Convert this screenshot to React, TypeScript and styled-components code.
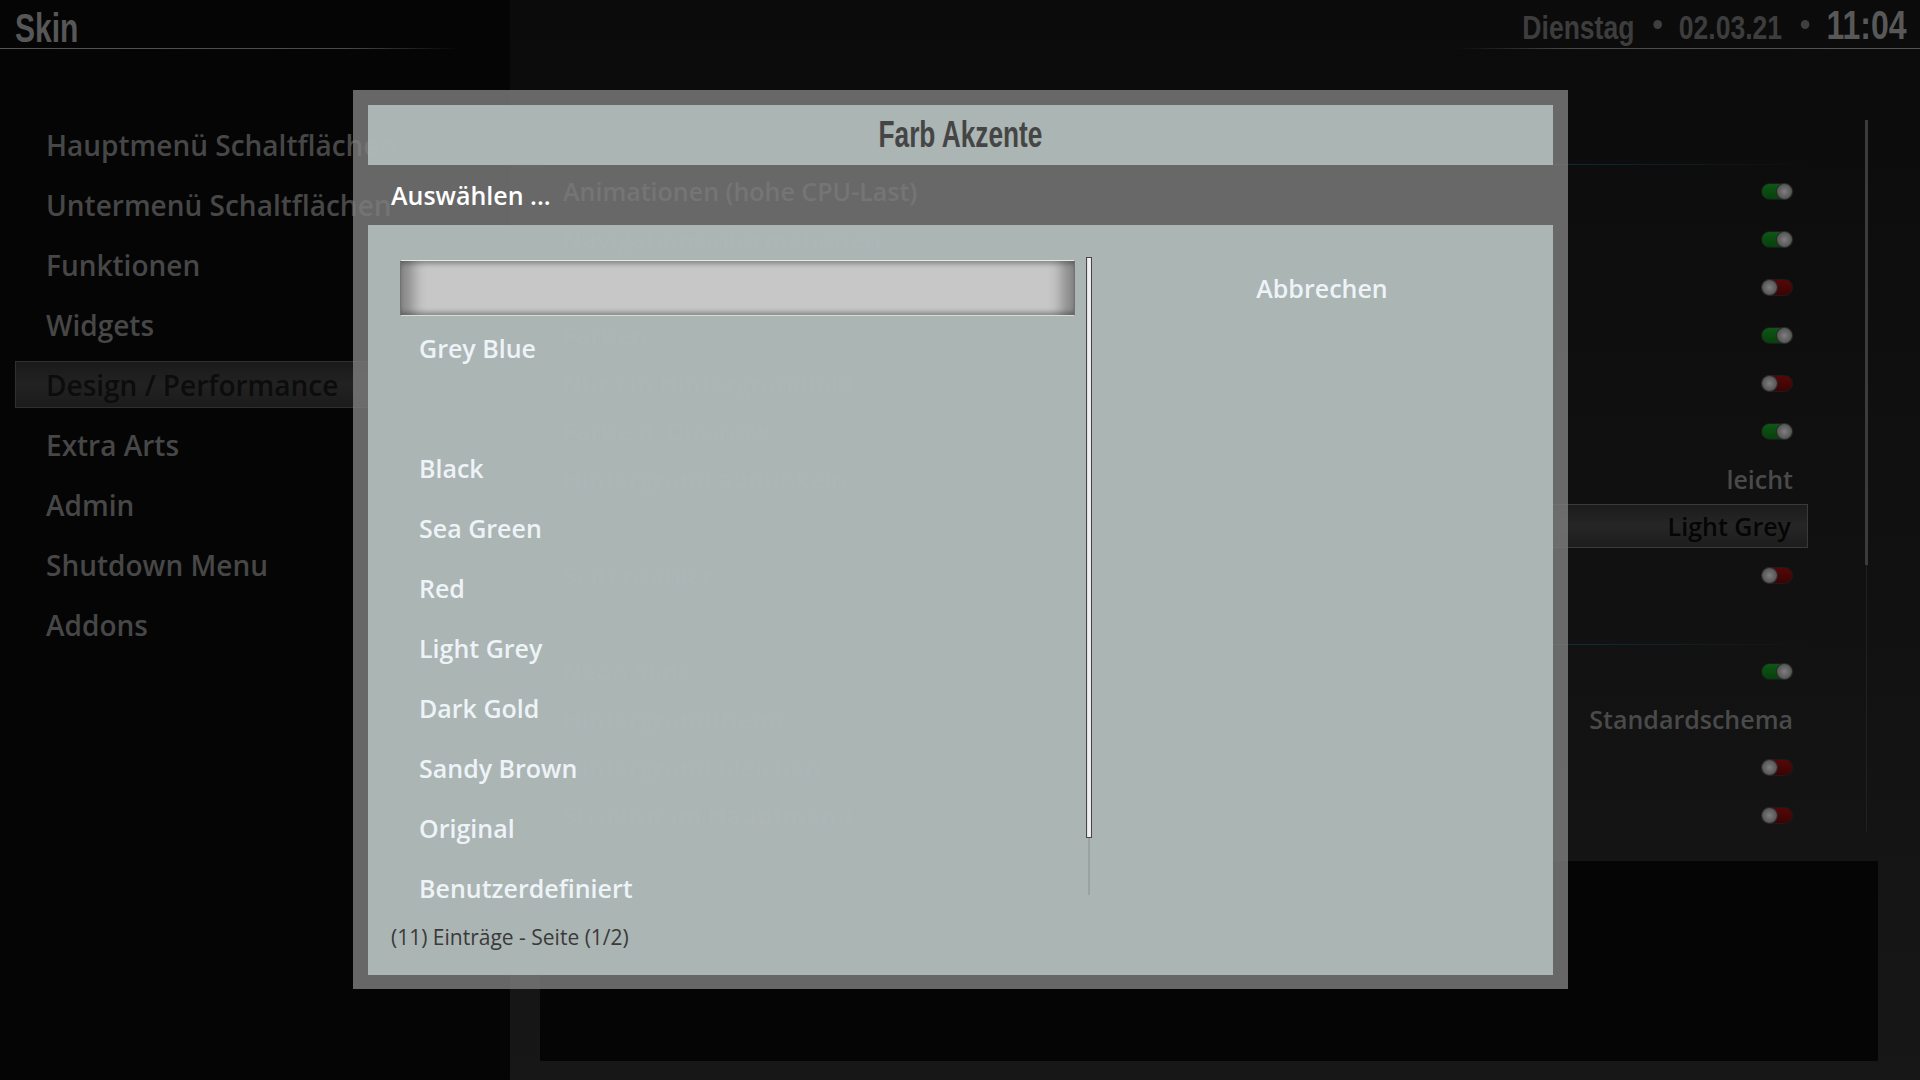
import styled, { createGlobalStyle } from 'styled-components';

const GlobalStyle = createGlobalStyle`
  html, body {
    margin: 0;
    padding: 0;
    background: #0c0c0c;
    overflow: hidden;
  }
`;

// no Impact-like face is installed, so squeeze a bold sans instead
const condensed = `"Liberation Sans", Arial, sans-serif`;

type Control =
  | { kind: 'toggle'; on: boolean }
  | { kind: 'value'; text: string }
  | { kind: 'gap' };

interface Setting {
  label: string;
  control: Control;
  active?: boolean;
}

const navItems = [
  'Hauptmenü Schaltflächen',
  'Untermenü Schaltflächen',
  'Funktionen',
  'Widgets',
  'Design / Performance',
  'Extra Arts',
  'Admin',
  'Shutdown Menu',
  'Addons',
];

const settings: Setting[] = [
  { label: 'Animationen (hohe CPU-Last)', control: { kind: 'toggle', on: true } },
  { label: 'Navigationsinformationen', control: { kind: 'toggle', on: true } },
  { label: 'Hintergrund-Overlay', control: { kind: 'toggle', on: false } },
  { label: 'Farben', control: { kind: 'toggle', on: true } },
  { label: 'Nur ein Hintergrundbild', control: { kind: 'toggle', on: false } },
  { label: 'Farbe d. Diashow', control: { kind: 'toggle', on: true } },
  { label: 'Hintergrund abdunkeln', control: { kind: 'value', text: 'leicht' } },
  { label: 'Farb Akzente', control: { kind: 'value', text: 'Light Grey' }, active: true },
  { label: 'Seitenzähler', control: { kind: 'toggle', on: false } },
  { label: '', control: { kind: 'gap' } },
  { label: 'Neon Slide', control: { kind: 'toggle', on: true } },
  { label: 'Hintergrundtheme', control: { kind: 'value', text: 'Standardschema' } },
  { label: 'Hintergrund bleichen', control: { kind: 'toggle', on: false } },
  { label: 'Struktur im Hauptmenü', control: { kind: 'toggle', on: false } },
];

const accents = [
  '',
  'Grey Blue',
  '',
  'Black',
  'Sea Green',
  'Red',
  'Light Grey',
  'Dark Gold',
  'Sandy Brown',
  'Original',
  'Benutzerdefiniert',
];

export default function App() {
  return (
    <>
      <GlobalStyle />
      <Screen>
        <Sidebar>
          <TopBar>
            <SkinTitle>Skin</SkinTitle>
          </TopBar>
          <HeaderRule />
          <Nav>
            {navItems.map((item) => (
              <NavItem key={item} $active={item === 'Design / Performance'}>
                {item}
              </NavItem>
            ))}
          </Nav>
        </Sidebar>

        <Main>
          <TopBar $right>
            <Clock>
              <DatePart>Dienstag</DatePart>
              <Dot />
              <DatePart>02.03.21</DatePart>
              <Dot />
              <TimePart>11:04</TimePart>
            </Clock>
          </TopBar>
          <HeaderRule $right />
          <MainContent>
            <SettingsList>
              <SectionRule />
              <RowsWrap>
                {settings.map((s, i) =>
                  s.control.kind === 'gap' ? (
                    <SectionGap key={i}>
                      <SectionRule />
                    </SectionGap>
                  ) : (
                    <SettingRow key={i} $active={s.active}>
                      <span>{s.label}</span>
                      {s.control.kind === 'toggle' ? (
                        <Toggle $on={s.control.on} />
                      ) : (
                        <span>{s.control.text}</span>
                      )}
                    </SettingRow>
                  ),
                )}
              </RowsWrap>
            </SettingsList>
            <PageScroll>
              <PageThumb />
              <PageTail />
            </PageScroll>
          </MainContent>
          <InfoBox />
        </Main>

        <Dialog>
          <DialogTitle>
            <TitleText>Farb Akzente</TitleText>
          </DialogTitle>
          <DialogBand>Auswählen ...</DialogBand>
          <DialogBody>
            <List>
              {accents.map((name, i) => (
                <ListItem key={i} $focused={i === 0}>
                  {name}
                </ListItem>
              ))}
            </List>
            <ListScroll>
              <ListThumb />
              <ListTail />
            </ListScroll>
            <ButtonColumn>
              <CancelButton>Abbrechen</CancelButton>
            </ButtonColumn>
            <Footer>(11) Einträge - Seite (1/2)</Footer>
          </DialogBody>
        </Dialog>
      </Screen>
    </>
  );
}

const Screen = styled.div`
  position: relative;
  width: 1920px;
  height: 1080px;
  display: grid;
  grid-template-columns: 510px 1fr;
  overflow: hidden;
  font-family: "Open Sans", "Noto Sans", sans-serif;
`;

const Sidebar = styled.div`
  background: #050505;
  display: flex;
  flex-direction: column;
`;

const Main = styled.div`
  background: linear-gradient(180deg, #0b0b0b 0%, #111111 55%, #171717 100%);
  display: flex;
  flex-direction: column;
`;

const TopBar = styled.div<{ $right?: boolean }>`
  height: 48px;
  display: flex;
  align-items: flex-end;
  justify-content: ${(p) => (p.$right ? 'flex-end' : 'flex-start')};
  padding: ${(p) => (p.$right ? '0 13px 0 0' : '0 0 0 15px')};
  box-sizing: border-box;
`;

const SkinTitle = styled.div`
  display: inline-block;
  font-family: ${condensed};
  font-weight: 700;
  font-size: 40px;
  line-height: 40px;
  height: 40px;
  color: #575757;
  transform: scaleX(0.75);
  transform-origin: left center;
`;

const HeaderRule = styled.div<{ $right?: boolean }>`
  height: 1px;
  width: ${(p) => (p.$right ? '463px' : '460px')};
  align-self: ${(p) => (p.$right ? 'flex-end' : 'flex-start')};
  background: ${(p) =>
    p.$right
      ? 'linear-gradient(90deg, rgba(90,90,90,0) 0%, #4a4a4a 25%, #555 100%)'
      : 'linear-gradient(90deg, #555 0%, #4a4a4a 75%, rgba(90,90,90,0) 100%)'};
`;

const Clock = styled.div`
  display: flex;
  align-items: baseline;
  height: 46px;
  font-family: ${condensed};
  font-weight: 700;
  line-height: 46px;
  transform: scaleX(0.78);
  transform-origin: right center;
`;

const DatePart = styled.span`
  font-size: 34px;
  color: #3d3d3d;
`;

const TimePart = styled.span`
  font-size: 41px;
  color: #585858;
`;

const Dot = styled.span`
  width: 11px;
  height: 9px;
  border-radius: 50%;
  background: #3f3f3f;
  margin: 0 22px 0 24px;
  transform: translateY(-10px);
`;

const Nav = styled.nav`
  margin-top: 72px;
  display: flex;
  flex-direction: column;
  gap: 13px;
`;

const NavItem = styled.div<{ $active?: boolean }>`
  box-sizing: border-box;
  height: 47px;
  width: 480px;
  margin-left: 15px;
  padding-left: 30px;
  display: flex;
  align-items: center;
  white-space: nowrap;
  font-size: 28px;
  font-weight: 600;
  color: ${(p) => (p.$active ? '#0c0c0c' : '#474747')};
  border: 1px solid ${(p) => (p.$active ? '#2f2f2f' : 'transparent')};
  background: ${(p) =>
    p.$active ? 'linear-gradient(180deg, #1a1a1a 0%, #222 50%, #1b1b1b 100%)' : 'transparent'};
`;

const MainContent = styled.div`
  margin: 71px 0 0 30px;
  display: grid;
  grid-template-columns: 1270px 3px;
  column-gap: 55px;
  align-items: start;
`;

const SettingsList = styled.div`
  margin-top: 44px;
  display: flex;
  flex-direction: column;
`;

const SectionRule = styled.div`
  height: 1px;
  background: linear-gradient(90deg, rgba(16, 70, 90, 0.9) 0%, rgba(16, 70, 90, 0.8) 70%, rgba(16, 70, 90, 0) 100%);
`;

const RowsWrap = styled.div`
  padding-top: 2px;
  display: flex;
  flex-direction: column;
`;

const SectionGap = styled.div`
  height: 48px;
  padding-top: 45px;
  box-sizing: border-box;
`;

const SettingRow = styled.div<{ $active?: boolean }>`
  box-sizing: border-box;
  height: ${(p) => (p.$active ? '44px' : '48px')};
  margin: ${(p) => (p.$active ? '1px 2px 3px 0' : '0')};
  padding: ${(p) => (p.$active ? '0 16px 0 22px' : '0 17px 0 23px')};
  display: flex;
  align-items: center;
  justify-content: space-between;
  font-size: 25px;
  font-weight: 600;
  white-space: nowrap;
  color: ${(p) => (p.$active ? '#050505' : '#4a4a4a')};
  border: ${(p) => (p.$active ? '1px solid #3a3a3a' : 'none')};
  background: ${(p) =>
    p.$active ? 'linear-gradient(180deg, #1c1c1c 0%, #262626 50%, #1d1d1d 100%)' : 'transparent'};
`;

const Toggle = styled.span<{ $on: boolean }>`
  position: relative;
  width: 32px;
  height: 17px;
  box-sizing: border-box;
  border-radius: 9px;
  border: 1px solid #1c1c1c;
  background: ${(p) =>
    p.$on
      ? 'linear-gradient(180deg, #0d5616 0%, #08400d 100%)'
      : 'linear-gradient(180deg, #560707 0%, #3a0404 100%)'};

  &::after {
    content: '';
    position: absolute;
    top: 0;
    left: ${(p) => (p.$on ? '15px' : '0')};
    width: 15px;
    height: 15px;
    border-radius: 50%;
    background: radial-gradient(circle at 50% 50%, #7e7e7e 0%, #5e5e5e 55%, #3e3e3e 100%);
    box-shadow: 0 0 0 1px #2a2a2a;
  }
`;

const PageScroll = styled.div`
  width: 3px;
  height: 712px;
  display: flex;
  flex-direction: column;
  align-items: center;
`;

const PageThumb = styled.div`
  width: 3px;
  height: 445px;
  background: #3b3b3b;
`;

const PageTail = styled.div`
  width: 1px;
  flex: 1;
  background: #202020;
`;

const InfoBox = styled.div`
  margin: 22px 0 0 30px;
  width: 1338px;
  height: 200px;
  background: #050505;
`;

const Dialog = styled.div`
  position: absolute;
  left: 353px;
  top: 90px;
  width: 1215px;
  height: 899px;
  box-sizing: border-box;
  padding: 15px 15px 14px;
  background: rgba(128, 128, 128, 0.8);
  display: flex;
  flex-direction: column;
`;

const DialogTitle = styled.div`
  height: 60px;
  flex-shrink: 0;
  background: rgba(175, 185, 184, 0.95);
  display: flex;
  align-items: center;
  justify-content: center;
`;

const TitleText = styled.span`
  display: inline-block;
  font-family: ${condensed};
  font-weight: 700;
  font-size: 37px;
  color: #454545;
  transform: scaleX(0.71);
  transform-origin: center;
`;

const DialogBand = styled.div`
  height: 60px;
  flex-shrink: 0;
  display: flex;
  align-items: center;
  padding-left: 23px;
  font-size: 25px;
  font-weight: 600;
  color: #ffffff;
`;

const DialogBody = styled.div`
  flex: 1;
  background: rgba(175, 185, 184, 0.95);
  box-sizing: border-box;
  padding: 35px 0 24px 32px;
  display: grid;
  grid-template-columns: 675px 6px 1fr;
  grid-template-rows: 1fr auto;
  column-gap: 11px;
`;

const List = styled.div`
  display: flex;
  flex-direction: column;
  gap: 4px;
`;

const ListItem = styled.div<{ $focused?: boolean }>`
  box-sizing: border-box;
  height: 56px;
  display: flex;
  align-items: center;
  padding-left: 19px;
  font-size: 25px;
  font-weight: 600;
  color: #eef3f8;
  ${(p) =>
    p.$focused &&
    `
    background: #c7c7c7;
    border-top: 1px solid #e9e9e9;
    border-bottom: 1px solid #dcdcdc;
    border-left: 1px solid #727272;
    border-right: 1px solid #727272;
    box-shadow:
      inset 0 5px 5px -2px rgba(0, 0, 0, 0.28),
      inset 0 -5px 5px -2px rgba(0, 0, 0, 0.28),
      inset 22px 0 14px -10px rgba(0, 0, 0, 0.32),
      inset -22px 0 14px -10px rgba(0, 0, 0, 0.32);
  `}
`;

const ListScroll = styled.div`
  margin-top: -3px;
  height: 638px;
  display: flex;
  flex-direction: column;
  align-items: center;
`;

const ListThumb = styled.div`
  box-sizing: border-box;
  width: 6px;
  height: 581px;
  border: 1px solid #474747;
  background: linear-gradient(90deg, #d8d8d8 0%, #f6f6f6 50%, #e4e4e4 100%);
`;

const ListTail = styled.div`
  width: 2px;
  flex: 1;
  background: #9ba3a2;
`;

const ButtonColumn = styled.div`
  display: flex;
  flex-direction: column;
  padding-right: 12px;
`;

const CancelButton = styled.div`
  height: 56px;
  display: flex;
  align-items: center;
  justify-content: center;
  font-size: 25px;
  font-weight: 600;
  color: #eef3f8;
`;

const Footer = styled.div`
  grid-column: 1 / -1;
  margin: 7px 0 0 -9px;
  font-size: 21px;
  color: #3a3a3a;
`;
